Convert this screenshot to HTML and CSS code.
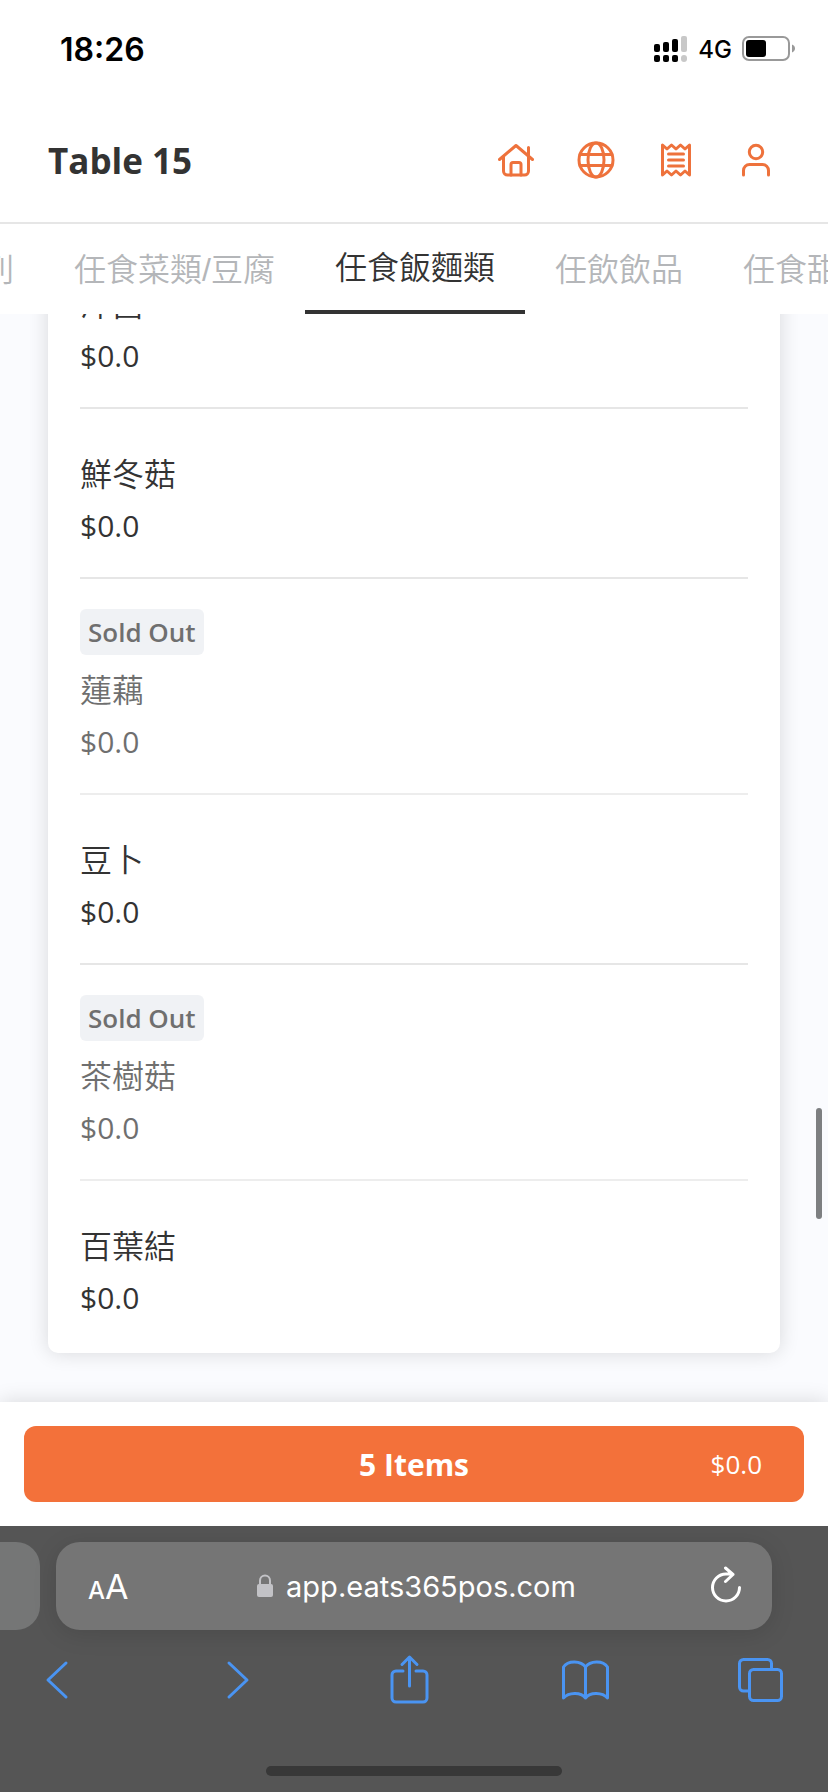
FILE: index.html
```
<!DOCTYPE html>
<html lang="zh-Hant">
<head>
  <meta charset="UTF-8">
  <meta name="viewport" content="width=device-width, initial-scale=1.0">
  <title>Table 15</title>
  <link rel="stylesheet" href="styles.css">
</head>
<body>
  <div class="status-bar">
    <span class="clock">18:26</span>
    <div class="status-right">
      <svg class="signal" width="34" height="28" viewBox="0 0 34 28">
        <rect x="0" y="9" width="6" height="8" rx="2"/>
        <rect x="9" y="7" width="6" height="10" rx="2"/>
        <rect x="18" y="4" width="6" height="13" rx="2"/>
        <rect x="27" y="1" width="6" height="16" rx="2" fill="#c8c8c8"/>
        <rect x="0" y="20" width="6" height="7" rx="2"/>
        <rect x="9" y="20" width="6" height="7" rx="2"/>
        <rect x="18" y="20" width="6" height="7" rx="2"/>
        <rect x="27" y="20" width="6" height="7" rx="3" fill="#c8c8c8"/>
      </svg>
      <span class="network">4G</span>
      <svg width="54" height="28" viewBox="0 0 54 28">
        <rect x="1" y="2" width="46" height="23" rx="6" fill="none" stroke="#999" stroke-width="2"/>
        <rect x="4" y="5" width="20" height="17" rx="3"/>
        <path d="M50 9.500c2 .8 3 2.200 3 4s-1 3.200-3 4z" fill="#999"/>
      </svg>
    </div>
  </div>

  <header class="header">
    <h1>Table 15</h1>
    <nav class="header-icons">
      <a href="#home" aria-label="Home">
        <svg width="40" height="40" viewBox="0 0 40 40">
          <path d="M3.500 19.500 20 5.500l16.500 14M32.500 16V7.500M7.500 17v14a4 4 0 0 0 4 4h17a4 4 0 0 0 4-4V17"/>
          <path d="M15 35V24.500a2 2 0 0 1 2-2h6a2 2 0 0 1 2 2V35"/>
        </svg>
      </a>
      <a href="#language" aria-label="Language">
        <svg width="40" height="40" viewBox="0 0 40 40">
          <circle cx="20" cy="20" r="17"/>
          <ellipse cx="20" cy="20" rx="8" ry="17"/>
          <path d="M4 14.500h32M4 25.500h32"/>
        </svg>
      </a>
      <a href="#orders" aria-label="Orders">
        <svg width="40" height="40" viewBox="0 0 40 40">
          <path d="M6.500 5v30l4.500-4 4.500 4 4.500-4 4.500 4 4.500-4 4.500 4V5L29 9l-4.500-4L20 9l-4.500-4L11 9z"/>
          <path d="M12.500 14h15M12.500 20h15M12.500 26h15"/>
        </svg>
      </a>
      <a href="#account" aria-label="Account">
        <svg width="40" height="40" viewBox="0 0 40 40">
          <circle cx="20" cy="12" r="6.700"/>
          <path d="M7.500 35v-4.500a6 6 0 0 1 6-6h13a6 6 0 0 1 6 6V35"/>
        </svg>
      </a>
    </nav>
  </header>

  <nav class="tabs">
    <a class="tab tab-cut" href="#t1">任食系列</a>
    <a class="tab" href="#t2">任食菜類/豆腐</a>
    <a class="tab active" href="#t3">任食飯麵類</a>
    <a class="tab" href="#t4">任飲飲品</a>
    <a class="tab" href="#t5">任食甜品</a>
  </nav>

  <main class="menu">
    <ul class="card">
      <li class="item">
        <div class="name">洋菖</div>
        <div class="price">$0.0</div>
      </li>
      <li class="item">
        <div class="name">鮮冬菇</div>
        <div class="price">$0.0</div>
      </li>
      <li class="item sold-out">
        <span class="badge">Sold Out</span>
        <div class="name">蓮藕</div>
        <div class="price">$0.0</div>
      </li>
      <li class="item">
        <div class="name">豆卜</div>
        <div class="price">$0.0</div>
      </li>
      <li class="item sold-out">
        <span class="badge">Sold Out</span>
        <div class="name">茶樹菇</div>
        <div class="price">$0.0</div>
      </li>
      <li class="item">
        <div class="name">百葉結</div>
        <div class="price">$0.0</div>
      </li>
    </ul>
    <div class="scroll-thumb"></div>
  </main>

  <div class="cart">
    <button class="cart-button">
      <span class="cart-count">5 Items</span>
      <span class="cart-total">$0.0</span>
    </button>
  </div>

  <footer class="browser">
    <div class="address-row">
      <div class="prev-page"></div>
      <div class="address">
        <button class="text-size" aria-label="Text size"><span class="small-a">A</span>A</button>
        <div class="url">
          <svg width="18" height="26" viewBox="0 0 18 26">
            <path d="M4 12V7.500a5 5 0 0 1 10 0V12" fill="none" stroke="#c2c2c6" stroke-width="2"/>
            <rect x="1" y="11" width="16" height="13" rx="2" fill="#c2c2c6"/>
          </svg>
          <span>app.eats365pos.com</span>
        </div>
        <button class="reload" aria-label="Reload">
          <svg width="36" height="40" viewBox="0 0 36 40">
            <path d="M31.500 21.500A13.500 13.500 0 1 1 18 8h6.500M17.500 2l7.500 6.500-7.500 7"/>
          </svg>
        </button>
      </div>
    </div>
    <div class="toolbar">
      <button aria-label="Back">
        <svg width="48" height="52" viewBox="0 0 48 52"><path d="M32 9 14 26l18 17"/></svg>
      </button>
      <button aria-label="Forward">
        <svg width="48" height="52" viewBox="0 0 48 52"><path d="M19 9l18 17-18 17"/></svg>
      </button>
      <button aria-label="Share">
        <svg width="48" height="52" viewBox="0 0 48 52">
          <path d="M18 17h-7a4 4 0 0 0-4 4v23a4 4 0 0 0 4 4h27a4 4 0 0 0 4-4V21a4 4 0 0 0-4-4h-7M24.500 32V3M17 10.500 24.500 3l7.500 7.500"/>
        </svg>
      </button>
      <button aria-label="Bookmarks">
        <svg width="48" height="52" viewBox="0 0 48 52">
          <path d="M24.500 13C20 6.500 7 6 2.500 13v31c5-5.500 17-6.500 22 0 5-6.500 17-5.500 22 0V13C42 6 29 6.500 24.500 13zv31"/>
        </svg>
      </button>
      <button aria-label="Pages">
        <svg width="48" height="52" viewBox="0 0 48 52">
          <rect x="13.500" y="15.500" width="32" height="31" rx="4"/>
          <path d="M13 37H7.500a4 4 0 0 1-4-4V9.500a4 4 0 0 1 4-4h24a4 4 0 0 1 4 4V15"/>
        </svg>
      </button>
    </div>
    <div class="home-indicator"></div>
  </footer>
</body>
</html>
```
FILE: styles.css
```
* {
  box-sizing: border-box;
}

body {
  margin: 0;
  height: 100vh;
  display: flex;
  flex-direction: column;
  overflow: hidden;
  background-color: #fff;
  color: #333;
  font-family: "Open Sans", "Noto Sans CJK TC", sans-serif;
}

a {
  color: inherit;
  text-decoration: none;
}

button {
  padding: 0;
  border: none;
  background: none;
  color: inherit;
  font-family: inherit;
  cursor: pointer;
}

svg {
  display: block;
}

/* Phone status bar */
.status-bar {
  display: flex;
  justify-content: space-between;
  align-items: center;
  height: 98px;
  padding: 0 32px 0 60px;
  color: #000;
  font-family: Inter, sans-serif;
}

.clock {
  font-size: 32px;
  font-weight: 600;
}

.status-right {
  display: flex;
  align-items: center;
  gap: 10px;
}

.network {
  font-size: 24px;
  font-weight: 500;
}

/* App header */
.header {
  display: flex;
  justify-content: space-between;
  align-items: center;
  height: 126px;
  padding: 0 52px 0 48px;
  border-bottom: 2px solid #e6e6e6;
}

h1 {
  margin: 0;
  font-size: 35px;
  font-weight: 700;
}

.header-icons {
  display: flex;
  gap: 40px;
}

.header-icons svg {
  fill: none;
  stroke: #ee723c;
  stroke-width: 3;
  stroke-linecap: round;
  stroke-linejoin: round;
}

/* Category tabs, scrolled to the active one */
.tabs {
  display: flex;
  height: 90px;
  overflow: hidden;
  font-family: "Liberation Sans", "Noto Sans CJK TC", sans-serif;
}

.tab {
  flex: none;
  display: flex;
  align-items: center;
  padding: 0 30px 4px;
  color: #b4b6b9;
  font-size: 32px;
  font-weight: 350;
  white-space: nowrap;
}

.tab-cut {
  justify-content: flex-end;
  width: 44px;
  padding-left: 0;
}

.tab.active {
  border-bottom: 4px solid #333;
  color: #333;
}

/* Menu */
.menu {
  position: relative;
  flex: 1;
  min-height: 0;
  display: flex;
  flex-direction: column;
  justify-content: flex-end;
  overflow: hidden;
  padding: 0 48px 49px;
  background-color: #fafbfe;
}

.card {
  list-style: none;
  margin: 0;
  padding: 0 32px 4px;
  border-radius: 10px;
  background-color: #fff;
  box-shadow: 0 0 20px rgba(0, 0, 0, 0.14);
}

.item {
  padding: 30px 0 25px;
  border-bottom: 2px solid #e6e6e6;
}

.item:last-child {
  border-bottom: none;
}

.sold-out {
  opacity: 0.7;
}

.badge {
  display: block;
  width: fit-content;
  padding: 0 8px;
  border-radius: 6px;
  background-color: #ebedf2;
  font-size: 26px;
  font-weight: 600;
  line-height: 46px;
}

.name {
  margin-top: 9px;
  font-size: 32px;
  font-weight: 350;
  line-height: 52px;
}

.price {
  font-size: 30px;
  line-height: 52px;
}

.scroll-thumb {
  position: absolute;
  top: 73%;
  right: 6px;
  width: 6px;
  height: 111px;
  border-radius: 3px;
  background-color: #7d7f81;
}

/* Cart */
.cart {
  position: relative;
  padding: 24px;
  background-color: #fff;
  box-shadow: 0 0 20px rgba(0, 0, 0, 0.14);
}

.cart-button {
  display: grid;
  grid-template-columns: 1fr auto 1fr;
  align-items: center;
  width: 100%;
  height: 76px;
  padding: 0 42px;
  border-radius: 12px;
  background-color: #f3713a;
  color: #fff;
}

.cart-count {
  grid-column: 2;
  font-size: 30px;
  font-weight: 700;
}

.cart-total {
  justify-self: end;
  font-size: 26px;
  font-weight: 400;
}

/* Browser controls */
.browser {
  position: relative;
  display: flex;
  flex-direction: column;
  align-items: stretch;
  height: 266px;
  padding: 16px 0;
  background-color: #555;
  color: #fff;
  font-family: Inter, sans-serif;
}

.address-row {
  display: flex;
  gap: 16px;
  height: 88px;
  padding-right: 56px;
}

.prev-page {
  width: 40px;
  border-radius: 0 24px 24px 0;
  background-color: #757676;
}

.address {
  flex: 1;
  display: grid;
  grid-template-columns: 1fr auto 1fr;
  align-items: center;
  padding: 0 28px 0 32px;
  border-radius: 24px;
  background-color: #757575;
  box-shadow: 0 4px 24px rgba(0, 0, 0, 0.12);
}

.text-size {
  justify-self: start;
  font-size: 34px;
}

.small-a {
  font-size: 24px;
  font-weight: 500;
}

.url {
  display: flex;
  align-items: center;
  gap: 12px;
  font-size: 29px;
}

.reload {
  justify-self: end;
}

.reload svg {
  fill: none;
  stroke: #fff;
  stroke-width: 3;
  stroke-linecap: round;
  stroke-linejoin: round;
}

.toolbar {
  display: flex;
  justify-content: space-between;
  padding: 24px 44px 0 34px;
}

.toolbar svg {
  fill: none;
  stroke: #4a94f2;
  stroke-width: 3;
  stroke-linecap: round;
  stroke-linejoin: round;
}

.home-indicator {
  width: 296px;
  height: 10px;
  margin: auto auto 0;
  border-radius: 5px;
  background-color: #383838;
}
```
